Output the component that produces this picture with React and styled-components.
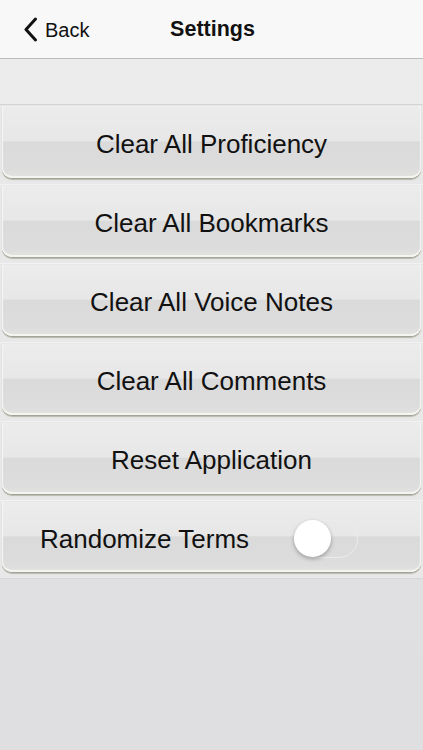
import styled, { createGlobalStyle } from "styled-components";
import { useState } from "react";

const GlobalStyle = createGlobalStyle`
  html, body {
    margin: 0;
    padding: 0;
    background: #e0e0e2;
    font-family: "Liberation Sans", Arial, sans-serif;
  }
`;

const actions = [
  "Clear All Proficiency",
  "Clear All Bookmarks",
  "Clear All Voice Notes",
  "Clear All Comments",
  "Reset Application",
];

export default function App() {
  const [random, setRandom] = useState(false);
  return (
    <Page>
      <GlobalStyle />
      <NavBar>
        <BackButton>
          <svg width="15" height="25" viewBox="0 0 15 25">
            <path
              d="M12.5 2 L3 12.5 L12.5 23"
              fill="none"
              stroke="#111"
              strokeWidth="3"
              strokeLinecap="round"
              strokeLinejoin="round"
            />
          </svg>
          <span>Back</span>
        </BackButton>
        <Title>Settings</Title>
      </NavBar>
      <Spacer />
      <List>
        {actions.map((label) => (
          <Row key={label}>
            <Tile>
              <Label $center>{label}</Label>
            </Tile>
          </Row>
        ))}
        <Row>
          <Tile>
            <Label>Randomize Terms</Label>
            <Switch $on={random} onClick={() => setRandom(!random)}>
              <Knob $on={random} />
            </Switch>
          </Tile>
        </Row>
      </List>
    </Page>
  );
}

const Page = styled.div`
  width: 423px;
  min-height: 750px;
  background: linear-gradient(#e3e3e5, #dfdfe1);
`;

const NavBar = styled.header`
  position: relative;
  height: 58px;
  background: #f8f8f8;
  border-bottom: 1px solid #bdbdbd;
  display: flex;
  align-items: center;
  justify-content: center;
`;

const BackButton = styled.div`
  position: absolute;
  left: 23px;
  top: 17px;
  display: flex;
  align-items: center;
  gap: 7px;
  color: #111;
  font-size: 20px;
  svg {
    display: block;
  }
  span {
    margin-top: 2px;
  }
`;

const Title = styled.h1`
  margin: 0 0 0 2px;
  font-size: 21.5px;
  font-weight: 700;
  color: #111;
`;

const Spacer = styled.div`
  height: 45px;
  background: #ececec;
  border-bottom: 1px solid #d4d4d4;
`;

const List = styled.div`
  display: flex;
  flex-direction: column;
`;

const Row = styled.div`
  height: 79px;
  box-sizing: border-box;
  padding: 1px 2px 6px;
  background: #e8e8e8;
  border-top: 1px solid #f2f2f2;
  &:first-child {
    border-top: none;
  }
  &:last-child {
    border-bottom: 1px solid #d6d6d6;
  }
`;

const Tile = styled.div`
  height: 100%;
  box-sizing: border-box;
  display: flex;
  align-items: center;
  padding: 0 38px 0 38px;
  border-radius: 2px 2px 10px 10px;
  background: linear-gradient(
    #ececec 0%,
    #e7e7e7 48%,
    #dadada 50%,
    #dddddd 90%,
    #e3e3e1 100%
  );
  box-shadow: inset 0 -2px 0 #f4f4f0, 0 1px 0 #a3a397, 0 2px 1px #b8b8ae,
    inset 1px 0 1px #f6f6f6, inset -1px 0 1px #f6f6f6;
`;

const Label = styled.span`
  flex: 1;
  font-size: 26px;
  color: #111;
  text-align: ${(p) => (p.$center ? "center" : "left")};
  margin-top: 4px;
`;

const Switch = styled.div`
  position: relative;
  width: 64px;
  height: 38px;
  box-sizing: border-box;
  border-radius: 19px;
  border: 1.5px solid ${(p) => (p.$on ? "#4cd964" : "#ececec")};
  background: ${(p) => (p.$on ? "#4cd964" : "transparent")};
  margin-top: 4px;
  margin-right: 25px;
  cursor: pointer;
`;

const Knob = styled.div`
  position: absolute;
  top: -1px;
  left: ${(p) => (p.$on ? "27px" : "-1px")};
  width: 37px;
  height: 37px;
  border-radius: 50%;
  background: #fff;
  box-shadow: 0 2px 4px rgba(0, 0, 0, 0.3);
`;
